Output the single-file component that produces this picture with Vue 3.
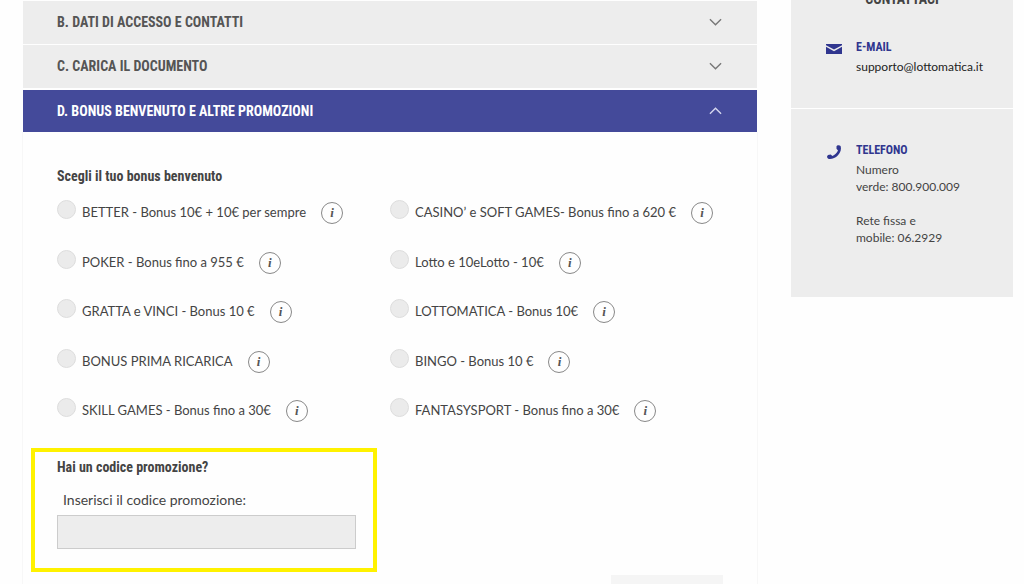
<script setup>
import { ref } from 'vue'

const sections = [
  { id: 'access', title: 'B. DATI DI ACCESSO E CONTATTI', open: false },
  { id: 'document', title: 'C. CARICA IL DOCUMENTO', open: false },
  { id: 'bonus', title: 'D. BONUS BENVENUTO E ALTRE PROMOZIONI', open: true },
]

const bonuses = [
  { id: 'better', label: 'BETTER - Bonus 10€ + 10€ per sempre' },
  { id: 'casino', label: 'CASINO’ e SOFT GAMES- Bonus fino a 620 €' },
  { id: 'poker', label: 'POKER - Bonus fino a 955 €' },
  { id: 'lotto', label: 'Lotto e 10eLotto - 10€' },
  { id: 'gratta', label: 'GRATTA e VINCI - Bonus 10 €' },
  { id: 'lottomatica', label: 'LOTTOMATICA - Bonus 10€' },
  { id: 'ricarica', label: 'BONUS PRIMA RICARICA' },
  { id: 'bingo', label: 'BINGO - Bonus 10 €' },
  { id: 'skill', label: 'SKILL GAMES - Bonus fino a 30€' },
  { id: 'fantasy', label: 'FANTASYSPORT - Bonus fino a 30€' },
]

const chosen = ref('')
const promoCode = ref('')
</script>

<template>
  <div class="page">
    <main class="form">
      <button
        v-for="s in sections"
        :key="s.id"
        type="button"
        class="bar"
        :class="{ open: s.open }"
        :aria-expanded="s.open"
      >
        <span>{{ s.title }}</span>
        <svg class="chevron" viewBox="0 0 14 8" aria-hidden="true">
          <path :d="s.open ? 'M1 7 L7 1 L13 7' : 'M1 1 L7 7 L13 1'" />
        </svg>
      </button>

      <section class="panel">
        <h2 id="bonus-title" class="heading">Scegli il tuo bonus benvenuto</h2>
        <div class="options" role="radiogroup" aria-labelledby="bonus-title">
          <div v-for="b in bonuses" :key="b.id" class="option">
            <input :id="b.id" v-model="chosen" class="radio" type="radio" name="bonus" :value="b.id" />
            <label :for="b.id">{{ b.label }}</label>
            <button type="button" class="info" :aria-label="'Informazioni: ' + b.label">i</button>
          </div>
        </div>

        <div class="promo">
          <h2 class="heading">Hai un codice promozione?</h2>
          <label class="promo-label" for="promo">Inserisci il codice promozione:</label>
          <input id="promo" v-model="promoCode" class="promo-input" type="text" />
        </div>

        <button type="button" class="next" disabled aria-label="Avanti"></button>
      </section>
    </main>

    <aside class="side">
      <h2 class="side-title">CONTATTACI</h2>
      <div class="contact">
        <svg class="icon" viewBox="0 0 16 16" aria-hidden="true">
          <path d="M0 3H16V4.200L8 8.600L0 4.200Z M0 5.800L8 10.200L16 5.800V13H0Z" />
        </svg>
        <div>
          <h3>E-MAIL</h3>
          <a href="mailto:supporto@lottomatica.it">supporto@lottomatica.it</a>
        </div>
      </div>
      <div class="contact phone">
        <svg class="icon" viewBox="0 0 16 16" aria-hidden="true">
          <path d="M10.500 2.300C10.800 1.100 13.500 0.700 14.600 2.100C15.600 5 14.600 8.500 12 11.200C9.400 13.900 6 15.300 3.200 15C1.700 14.800 0.900 13.600 1.100 12.200L2 11L4.700 10.500L6.400 12C8.900 11 10.900 9 12 6.600L10.500 4.700Z" />
        </svg>
        <div>
          <h3>TELEFONO</h3>
          <p>Numero<br />verde: 800.900.009</p>
          <p>Rete fissa e<br />mobile: 06.2929</p>
        </div>
      </div>
    </aside>
  </div>
</template>

<style>
body {
  margin: 0;
  background: #fefefe;
}
</style>

<style scoped>
.page {
  display: grid;
  grid-template-columns: minmax(0, 1fr) 222px;
  gap: 34px;
  height: 100vh;
  padding: 1px 11px 0 23px;
  box-sizing: border-box;
  overflow: hidden;
  font-family: Lato, "Liberation Sans", sans-serif;
  font-size: 12px;
  color: #444;
}
h2, h3, p {
  margin: 0;
}
.bar {
  display: flex;
  align-items: center;
  justify-content: space-between;
  width: 100%;
  height: 43px;
  margin: 0 0 1px;
  padding: 0 35px 2px 34px;
  border: 0;
  background: #ededed;
  color: #555;
  font: 700 14px/20px "Roboto Condensed", Roboto, sans-serif;
  text-align: left;
}
.bar.open {
  margin: 2px 0 0;
  height: 42px;
  padding-bottom: 0;
  background: #444a9a;
  color: #fff;
}
.chevron {
  width: 13px;
  height: 8px;
  fill: none;
  stroke: #777;
  stroke-width: 1.5;
}
.open .chevron {
  stroke: #d5d7ee;
}
.panel {
  padding: 34px 34px 0;
  border: solid #f7f7f7;
  border-width: 0 1px;
  margin: 0 -1px;
}
.heading {
  font: 700 14px/20px "Roboto Condensed", Roboto, sans-serif;
  color: #444;
}
.options {
  display: grid;
  grid-template-columns: 1fr 1fr;
  grid-template-rows: repeat(5, 1fr);
  min-height: 248px;
  margin-top: 12px;
}
.option {
  display: flex;
  align-items: flex-start;
}
.option label {
  margin: 4px 15px 0 6px;
  font-size: 13px;
  line-height: 20px;
}
.radio {
  appearance: none;
  flex: none;
  width: 19px;
  height: 19px;
  margin: 2px 0 0;
  border: 1px solid #ddd;
  border-radius: 50%;
  background: #ebebeb;
}
.radio:checked {
  background: #444a9a;
}
.info {
  flex: none;
  width: 22px;
  height: 22px;
  margin: 4px 0 0;
  padding: 0;
  border: 1px solid #888;
  border-radius: 50%;
  background: transparent;
  color: #555;
  font: italic 700 13px/18px "Liberation Serif", serif;
}
.promo {
  width: 346px;
  box-sizing: border-box;
  margin: 2px 0 0 -26px;
  padding: 5px 17px 19px 22px;
  border: 4px solid #fff200;
}
.promo-label {
  display: block;
  margin: 13px 0 5px 6px;
  font-size: 14px;
  line-height: 20px;
}
.promo-input {
  display: block;
  width: 100%;
  height: 34px;
  box-sizing: border-box;
  padding: 0 8px;
  border: 1px solid #ccc;
  background: #ededed;
  font: inherit;
}
.next {
  display: block;
  width: 112px;
  height: 36px;
  margin: 3px 0 0 auto;
  border: 0;
  background: #f5f5f5;
}
.side {
  align-self: start;
  margin-top: -12px;
  background: #ededed;
}
.side-title {
  font: 700 14px/20px "Roboto Condensed", Roboto, sans-serif;
  text-align: center;
}
.contact {
  display: flex;
  gap: 14px;
  padding: 29px 20px 33px 35px;
  line-height: 17px;
}
.contact.phone {
  padding: 32px 20px 51px 35px;
  border-top: 1px solid #fff;
}
.contact h3 {
  font: 700 12px/18px "Roboto Condensed", Roboto, sans-serif;
  color: #30368f;
  margin-bottom: 2px;
}
.contact a {
  color: #222;
  text-decoration: none;
}
.contact p + p {
  margin-top: 17px;
}
.icon {
  flex: none;
  width: 16px;
  height: 16px;
  margin-top: 3px;
  fill: #30368f;
}
</style>
